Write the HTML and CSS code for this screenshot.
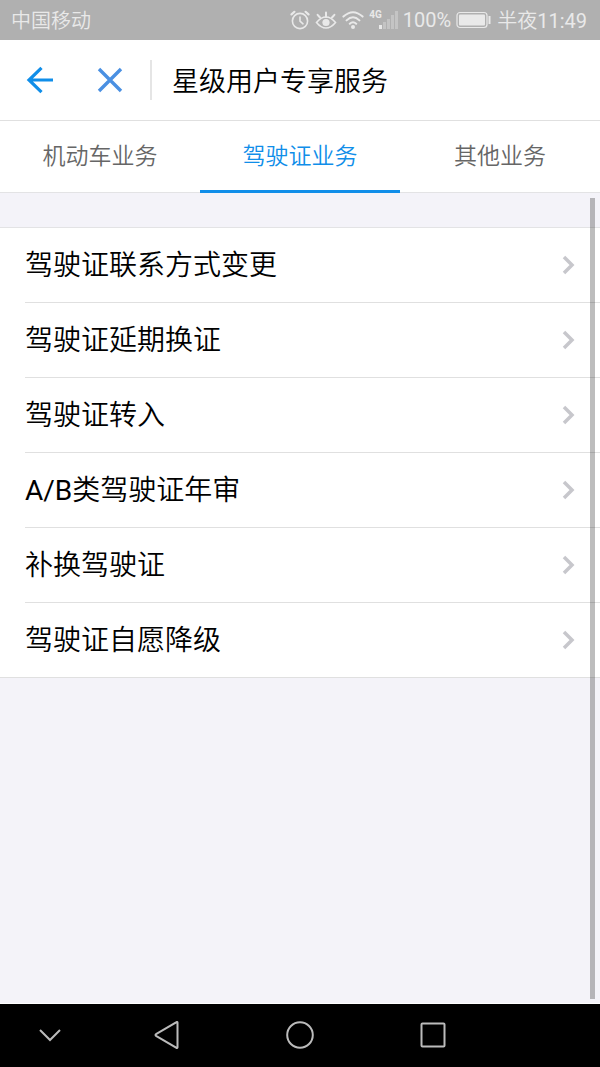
FILE: index.html
```html
<!DOCTYPE html>
<html lang="zh-CN">
<head>
    <meta charset="UTF-8">
    <meta name="viewport" content="width=device-width, initial-scale=1.0">
    <title>星级用户专享服务</title>
    <link rel="stylesheet" href="styles.css">
</head>
<body>
    <div class="status-bar">
        <span class="status-text">中国移动</span>
        <div class="status-icons">
            <svg width="20" height="20" viewBox="0 0 20 20" fill="none" stroke="currentColor" stroke-width="1.6" stroke-linecap="round">
                <circle cx="10" cy="11" r="7.6"/>
                <path d="M10 7v4.200l3 2.600"/>
                <path d="M1.500 4.400L4.400 1.800M18.500 4.400L15.600 1.800" stroke-width="2.200"/>
            </svg>
            <svg width="22" height="20" viewBox="0 0 22 20" fill="none" stroke="currentColor" stroke-width="1.6" stroke-linecap="round">
                <path d="M1.500 12.500Q6 7 11 7T20.500 12.500Q16 18 11 18T1.500 12.500z"/>
                <path d="M11 7V2.500M5 7.500L2.600 4.800M17 7.500L19.400 4.800" stroke-width="2"/>
                <circle cx="11" cy="12.500" r="3.600" fill="currentColor" stroke="none"/>
            </svg>
            <svg width="22" height="20" viewBox="0 0 22 20" fill="none" stroke="currentColor" stroke-width="2" stroke-linecap="round">
                <path d="M1.400 6.600Q11-2.200 20.600 6.600M4.600 10.400Q11 4.200 17.400 10.400M7.800 13.800Q11 10.800 14.200 13.800"/>
                <circle cx="11" cy="17" r="2" fill="currentColor" stroke="none"/>
            </svg>
            <div class="signal">
                <span class="network">4G</span>
                <svg width="20" height="20" viewBox="0 0 20 20" fill="currentColor">
                    <rect x="1" y="15" width="3" height="4"/>
                    <g opacity="0.35">
                        <rect x="5" y="12" width="3" height="7"/>
                        <rect x="9" y="9" width="3" height="10"/>
                        <rect x="13" y="5" width="3" height="14"/>
                        <rect x="17" y="1" width="3" height="18"/>
                    </g>
                </svg>
            </div>
            <span class="latin">100%</span>
            <svg width="36" height="20" viewBox="0 0 36 20" fill="none" stroke="currentColor">
                <rect x="1" y="2.500" width="30" height="15" rx="3" stroke-width="1.200"/>
                <rect x="3" y="4.500" width="26" height="11" rx="1" fill="currentColor" stroke="none"/>
                <path d="M33.500 6v8" stroke-width="2"/>
            </svg>
            <span class="status-text">半夜<span class="latin">11:49</span></span>
        </div>
    </div>

    <header class="header">
        <button class="icon-btn back" aria-label="返回">
            <svg width="28" height="28" viewBox="0 0 28 28" fill="none" stroke="currentColor" stroke-width="3.200">
                <path d="M27 14H3M15.500 1.800L3 14l12.500 12.200"/>
            </svg>
        </button>
        <button class="icon-btn close" aria-label="关闭">
            <svg width="28" height="28" viewBox="0 0 28 28" fill="none" stroke="currentColor" stroke-width="3.400">
                <path d="M3 3l22 22M25 3L3 25"/>
            </svg>
        </button>
        <h1>星级用户专享服务</h1>
    </header>

    <nav class="tabs">
        <a href="#vehicle">机动车业务</a>
        <a href="#license" class="active">驾驶证业务</a>
        <a href="#other">其他业务</a>
    </nav>

    <main class="content">
        <ul class="service-list">
            <li><a href="#contact"><span>驾驶证联系方式变更</span><svg class="arrow" viewBox="0 0 14 20"><path d="M2 2l8 8-8 8"/></svg></a></li>
            <li><a href="#renew"><span>驾驶证延期换证</span><svg class="arrow" viewBox="0 0 14 20"><path d="M2 2l8 8-8 8"/></svg></a></li>
            <li><a href="#transfer"><span>驾驶证转入</span><svg class="arrow" viewBox="0 0 14 20"><path d="M2 2l8 8-8 8"/></svg></a></li>
            <li><a href="#review"><span><span class="latin">A/B</span>类驾驶证年审</span><svg class="arrow" viewBox="0 0 14 20"><path d="M2 2l8 8-8 8"/></svg></a></li>
            <li><a href="#replace"><span>补换驾驶证</span><svg class="arrow" viewBox="0 0 14 20"><path d="M2 2l8 8-8 8"/></svg></a></li>
            <li><a href="#downgrade"><span>驾驶证自愿降级</span><svg class="arrow" viewBox="0 0 14 20"><path d="M2 2l8 8-8 8"/></svg></a></li>
        </ul>
        <div class="scrollbar"></div>
    </main>

    <footer class="system-nav">
        <button class="edge" aria-label="收起">
            <svg width="28" height="28" viewBox="0 0 28 28"><path d="M4 9l10 10L24 9"/></svg>
        </button>
        <button aria-label="后退">
            <svg width="28" height="28" viewBox="0 0 28 28"><path d="M24.500 1.500v25a.6.600 0 0 1-1 .4L3 14.800a.9.900 0 0 1 0-1.600L23.500 1.100a.6.600 0 0 1 1 .4z"/></svg>
        </button>
        <button aria-label="主页">
            <svg width="28" height="28" viewBox="0 0 28 28"><circle cx="14" cy="14" r="12.800"/></svg>
        </button>
        <button aria-label="最近任务">
            <svg width="28" height="28" viewBox="0 0 28 28"><rect x="2.500" y="2.500" width="23" height="23" rx="1"/></svg>
        </button>
        <span class="edge"></span>
    </footer>
</body>
</html>
```

FILE: styles.css
```css
* {
    box-sizing: border-box;
}
body {
    display: flex;
    flex-direction: column;
    min-height: 100vh;
    margin: 0;
    font-family: Roboto, "Noto Sans CJK SC", sans-serif;
    font-weight: 350;
    background-color: #f4f3f9;
    color: #000;
}
a {
    color: inherit;
    text-decoration: none;
}
button {
    padding: 0;
    border: none;
    background: none;
    cursor: pointer;
}
svg {
    display: block;
    flex: none;
}

/* Status bar */
.status-bar {
    display: flex;
    justify-content: space-between;
    align-items: center;
    height: 40px;
    padding: 0 13px 0 11px;
    background-color: #b0b0b0;
    color: #e9e9e9;
    font-size: 20px;
    line-height: 24px;
    white-space: nowrap;
}
.status-text {
    padding-top: 2px;
}
.status-icons {
    display: flex;
    align-items: center;
    gap: 5px;
}
.signal {
    display: flex;
}
.network {
    font-size: 10px;
    font-weight: 700;
    line-height: 10px;
    margin-right: -4px;
}
.latin {
    font-weight: 400;
}

/* Title bar */
.header {
    display: flex;
    align-items: center;
    height: 81px;
    padding-left: 5px;
    background-color: #fff;
    border-bottom: 1px solid #e0e0e0;
}
.icon-btn {
    display: flex;
    justify-content: center;
    align-items: center;
    width: 70px;
    height: 80px;
}
.back {
    color: #108ee9;
}
.close {
    color: #4a90e2;
}
.header h1 {
    margin: 0 0 0 5px;
    padding: 4px 0 0 20px;
    border-left: 2px solid #e5e5e5;
    font-size: 27px;
    font-weight: 350;
    line-height: 36px;
}

/* Tabs */
.tabs {
    display: flex;
    height: 72px;
    background-color: #fff;
    border-bottom: 1px solid #e3e3e5;
}
.tabs a {
    position: relative;
    flex: 1;
    color: #666;
    font-size: 23px;
    line-height: 71px;
    text-align: center;
}
.tabs .active {
    color: #108ee9;
}
.tabs .active::after {
    content: "";
    position: absolute;
    left: 0;
    right: 0;
    bottom: -1px;
    height: 3px;
    background-color: #108ee9;
}

/* Service list */
.content {
    position: relative;
    flex: 1;
    padding-top: 34px;
    border-bottom: 1px solid #fff;
}
.service-list {
    margin: 0;
    padding: 0 0 0 25px;
    list-style: none;
    background-color: #fff;
    border-top: 1px solid #e3e3e5;
    border-bottom: 1px solid #e0e0e0;
}
.service-list a {
    display: flex;
    justify-content: space-between;
    align-items: center;
    height: 74px;
    padding-right: 24px;
    font-size: 28px;
}
.service-list a > span {
    padding-bottom: 4px;
}
.service-list li + li {
    border-top: 1px solid #e0e0e0;
}
.arrow {
    width: 14px;
    height: 20px;
    fill: none;
    stroke: #c7c7cc;
    stroke-width: 3.5;
}
.scrollbar {
    position: absolute;
    top: 5px;
    right: 5px;
    bottom: 4px;
    width: 5px;
    background-color: rgba(0, 0, 0, 0.26);
}

/* System navigation */
.system-nav {
    display: flex;
    height: 63px;
    background-color: #000;
}
.system-nav button {
    display: flex;
    flex: 4;
    justify-content: center;
    align-items: center;
    padding-bottom: 1px;
}
.system-nav .edge {
    flex: 3;
}
.system-nav svg {
    fill: none;
    stroke: #bbb;
    stroke-width: 2;
}
```
